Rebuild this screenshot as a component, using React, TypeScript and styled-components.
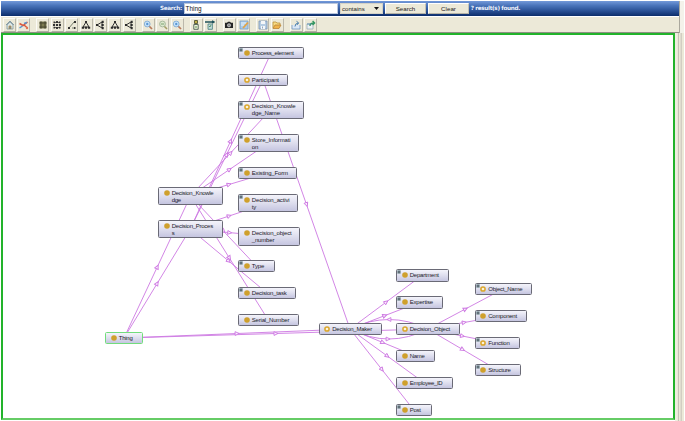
import React from 'react';
import styled, { createGlobalStyle } from 'styled-components';

const Global = createGlobalStyle`
  * { box-sizing: border-box; }
  html, body { margin: 0; padding: 0; overflow: hidden; background: #fff; }
`;

const Page = styled.div`
  display: flex;
  flex-direction: column;
  width: 685px;
  height: 421px;
  padding: 1px 1px 0 1px;
  background: #fff;
  font-family: 'Liberation Sans', Arial, sans-serif;
`;

const Top = styled.div`
  display: flex;
  height: 32px;
  flex: none;
  background: linear-gradient(90deg, #f4f2ea 0 683px, #fff 683px);
`;

const Bars = styled.div`
  display: flex;
  flex-direction: column;
  width: 679px;
  border-right: 1px solid #aaa89d;
`;

const SearchBar = styled.div`
  display: flex;
  align-items: flex-start;
  height: 15px;
  padding: 2px 0 0 159px;
  background: linear-gradient(#7399d9 0%, #4a74ba 30%, #2d5499 62%, #0c2d6b 100%);
`;

const Caption = styled.span<{ $w: number; $track: number }>`
  width: ${p => p.$w}px;
  flex: none;
  color: #eef3fc;
  font: bold 5.7px/11px 'DejaVu Sans', sans-serif;
  letter-spacing: ${p => p.$track}px;
  white-space: nowrap;
`;

const SearchInput = styled.div`
  width: 154px;
  height: 11px;
  padding-left: 1px;
  border: 1px solid #b9c6dc;
  background: #fff;
  color: #111;
  font-size: 6.4px;
  line-height: 10px;
`;

const Select = styled.div`
  display: flex;
  align-items: center;
  justify-content: space-between;
  width: 43px;
  height: 11px;
  margin-left: 2.5px;
  padding: 0 3px 0 1px;
  border: 1px solid #d4d2c7;
  background: #ece9d8;
  color: #222;
  font-size: 6.1px;
  line-height: 9px;
`;

const PushButton = styled.div`
  width: 41px;
  height: 11px;
  margin-left: 2px;
  border: 1px solid;
  border-color: #fff #c4c1b3 #b5b2a5 #fff;
  background: #ece9d8;
  color: #222;
  font-size: 6.2px;
  line-height: 9.5px;
  text-align: center;
`;

const Toolbar = styled.div`
  display: flex;
  align-items: center;
  gap: 6px;
  height: 17px;
  padding-left: 2px;
  border-top: 1px solid #fff;
  border-bottom: 1px solid #8f8e85;
  background: #ece9d8;
`;

const Group = styled.div`
  display: flex;
  gap: 1.4px;
`;

const Tool = styled.div`
  display: grid;
  place-items: center;
  width: 13px;
  height: 14px;
  border: 1px solid;
  border-color: #fbfaf5 #bbb8ab #b2afa3 #fbfaf5;
  background: #ece9d8;
  svg { display: block; }
`;

const Body = styled.div`
  display: flex;
  flex: 1;
  min-height: 0;
`;

const Canvas = styled.div`
  position: relative;
  width: 674px;
  height: 387px;
  border: 2px solid #22b32b;
  border-bottom-color: #66cc66;
  background: #fff;
`;

const Gutter = styled.div`
  width: 9px;
  background: linear-gradient(90deg,
    #f0ede1 0 2px, #ece9d8 2px 3px, #c6c3b8 3px 4px, #ece9d8 4px 5px,
    #e0dccf 5px 6px, #d2cdc2 6px 7px, #ece9d8 7px 9px);
`;

const Edges = styled.svg`
  position: absolute;
  left: -3px;
  top: -35px;
  overflow: visible;
`;

const NodeBox = styled.div<{ $x: number; $y: number; $w: number; $h: number; $root?: boolean }>`
  position: absolute;
  left: ${p => p.$x - 3}px;
  top: ${p => p.$y - 35}px;
  width: ${p => p.$w}px;
  height: ${p => p.$h}px;
  display: flex;
  align-items: flex-start;
  gap: 2.2px;
  padding: 1.9px 0 0 4.6px;
  border: 1px solid ${p => (p.$root ? '#72dc7c' : '#6a6a76')};
  border-radius: 1.5px;
  background: linear-gradient(#f4f4fb, #dedeee 50%, #c5c5e0);
`;

const DotIcon = styled.svg`
  flex: none;
  display: block;
  margin-top: 0.4px;
`;

const Label = styled.div<{ $track: number }>`
  color: #20202a;
  font-size: 6px;
  line-height: 6.7px;
  letter-spacing: ${p => p.$track - 0.06}px;
  white-space: pre;
`;

const Expander = styled.svg`
  position: absolute;
  left: 0;
  top: 0;
`;

type NodeSpec = { id: string; x: number; y: number; w: number; h: number; text: string; tw: number; plus?: boolean; ring?: boolean; root?: boolean };

const n = (id: string, x: number, y: number, r: number, b: number, text: string, tw: number, flags = ''): NodeSpec => ({
  id, x, y, w: r - x, h: b - y, text, tw,
  plus: flags.includes('+'), ring: flags.includes('o'), root: flags.includes('r'),
});

const nodes: NodeSpec[] = [
  n('pe', 238, 47, 304, 59, 'Process_element', -0.24, '+'),
  n('pa', 238, 74, 288, 86, 'Participant', -0.05, 'o'),
  n('dkn', 238, 100.5, 303.5, 119, 'Decision_Knowle\ndge_Name', -0.1, '+o'),
  n('st', 238, 134, 299, 152, 'Store_Informati\non', -0.1, '+'),
  n('ef', 238, 167, 297, 179, 'Existing_Form', -0.12, '+'),
  n('da', 238, 194, 298, 212, 'Decision_activi\nty', -0.1, '+'),
  n('on', 238, 227, 300, 245.5, 'Decision_object\n_number', -0.12),
  n('ty', 238, 260, 274.5, 272, 'Type', -0.1, '+'),
  n('dt', 238, 287, 296, 299, 'Decision_task', -0.14, '+'),
  n('sn', 238, 314, 298.5, 326, 'Serial_Number', -0.14),
  n('dk', 158, 187, 223, 205, 'Decision_Knowle\ndge', -0.24),
  n('dp', 158, 220, 222.5, 238, 'Decision_Proces\ns', -0.2),
  n('th', 105, 332, 143, 344, 'Thing', -0.2, 'r'),
  n('dm', 318.5, 323, 381.5, 335, 'Decision_Maker', -0.18, 'o'),
  n('do', 396, 323, 459.5, 335, 'Decision_Object', -0.18, 'o'),
  n('dep', 396, 269, 448.5, 281.5, 'Department', -0.18, '+'),
  n('ex', 396, 296, 443, 308.5, 'Expertise', -0.15, '+'),
  n('na', 396, 350, 435, 362, 'Name', -0.25),
  n('em', 396, 377, 453, 389, 'Employee_ID', -0.25),
  n('po', 396, 404, 431.5, 416, 'Post', -0.2, '+'),
  n('obn', 474.5, 283, 531.5, 295, 'Object_Name', -0.18, '+o'),
  n('co', 474.5, 310, 526.5, 322, 'Component', -0.22, '+'),
  n('fu', 474.5, 337, 519.5, 349, 'Function', -0.15, '+o'),
  n('sr', 474.5, 364, 520.5, 376, 'Structure', -0.15, '+'),
];

const links: [string, string][] = [
  ['dp', 'pe'], ['dp', 'pa'], ['pa', 'dm'], ['dk', 'dkn'], ['dk', 'st'], ['dk', 'ef'],
  ['dp', 'da'], ['dp', 'on'], ['dk', 'ty'], ['dp', 'dt'], ['dk', 'sn'], ['th', 'dk'],
  ['th', 'dp'], ['th', 'dm'], ['th', 'do'], ['dm', 'dep'], ['dm', 'ex'], ['dm', 'na'],
  ['dm', 'em'], ['dm', 'po'], ['do', 'obn'], ['do', 'co'], ['do', 'fu'], ['do', 'sr'],
];

const center = (id: string) => {
  const s = nodes.find(v => v.id === id)!;
  return [s.x + s.w / 2, s.y + s.h / 2];
};

const Arrow = ({ x, y, a }: { x: number; y: number; a: number }) => (
  <path d="M-1.9,-1.9 L2.1,0 L-1.9,1.9 Z" fill="#fbf0fd" transform={`translate(${x} ${y}) rotate(${a})`} />
);

const Graph = () => (
  <Edges width="674" height="421" viewBox="0 0 674 421" fill="none" stroke="#cd78e2" strokeWidth="0.9">
    {links.map(([a, b]) => {
      const [x1, y1] = center(a);
      const [x2, y2] = center(b);
      return <path key={a + b} d={`M${x1},${y1}L${x2},${y2}`} />;
    })}
    <path d="M350,329 Q389,310 428,329" />
    <path d="M350,329 Q389,349 428,329" />
    {links.map(([a, b]) => {
      const [x1, y1] = center(a);
      const [x2, y2] = center(b);
      const angle = (Math.atan2(y2 - y1, x2 - x1) * 180) / Math.PI;
      return <Arrow key={a + b} x={(x1 + x2) / 2} y={(y1 + y2) / 2} a={angle} />;
    })}
    <Arrow x={389} y={319.5} a={180} />
    <Arrow x={388} y={339} a={0} />
  </Edges>
);

const icons: Record<string, React.ReactNode> = {
  home: <><path d="M1,5 L5,1 L9,5" stroke="#6c8799" /><path d="M2,5v4h6v-4L5,2Z" fill="#dbe7e8" stroke="#8198a1" /><path d="M4,9V6h2v3" stroke="#bd9148" fill="#658aa6" /></>,
  cut: <><path d="M0.5,3.5L4,5.5 8.5,2M5,5l3.5,3" stroke="#d9593e" strokeWidth="1.5" /><path d="M0.5,8l3,-2M5,3.5l3,-1" stroke="#5b92cc" strokeWidth="1.5" /><circle cx="8" cy="8" r="1.2" fill="#e17654" /></>,
  grid: <><path d="M1.5,1.5h7v7h-7Z" fill="#8f8d5c" /><path d="M2,2h2.2v2.2H2ZM5.8,2h2.2v2.2H5.8ZM2,5.8h2.2v2.2H2ZM5.8,5.8h2.2v2.2H5.8Z" fill="#6a6840" stroke="#38382b" strokeWidth=".6" /></>,
  radial: <g stroke="#333"><path d="M1,5h8M5,1v8" strokeWidth="1.9" strokeDasharray="2 1" /><path d="M2.3,1.5v7M7.7,1.5v7" strokeWidth="1.6" strokeDasharray="1.8 .8" /><path d="M2.5,2.5h5M2.5,7.5h5" strokeWidth=".7" /></g>,
  spring: <><path d="M2,8L7,2M7,2h2M5,8h3" stroke="#5b6352" /><path d="M1,7h2v2H1ZM7,1h2v2H7ZM7,7h1.5v2H7Z" fill="#333" /></>,
  tree: <><path d="M5,2L2,7h6Z" stroke="#333" strokeWidth="1" /><path d="M4,1h2v2H4ZM.8,6.7h2.2v2H.8ZM3.9,6.7h2.2v2H3.9ZM7,6.7h2.2v2H7Z" fill="#2c2c2c" /></>,
  side: <><path d="M2,5L7,2v6Z" stroke="#333" strokeWidth="1" /><path d="M1,4h2v2H1ZM6.7,.8h2v2.2h-2ZM6.7,3.9h2v2.2h-2ZM6.7,7h2v2.2h-2Z" fill="#2c2c2c" /></>,
  zoom: <><path d="M6,6L9,9" stroke="#b97b5c" strokeWidth="1.7" /><circle cx="4.2" cy="4" r="2.9" fill="#c8e4fb" stroke="#78a4cf" /><path d="M3,4h2.5M4.2,2.8v2.4" stroke="#347bc5" /></>,
  fit: <><path d="M6,6L9,9" stroke="#a39e65" strokeWidth="1.6" /><circle cx="4.5" cy="4" r="2.9" fill="#dce8ce" stroke="#9aae91" /><path d="M3,4h3" stroke="#668f58" /></>,
  pin: <><path d="M3.5,0.5h3v3h-3Z" fill="#bdb046" stroke="#44452c" /><path d="M2.8,4.5h4.4v4.8H2.8Z" fill="#eff2dd" stroke="#354d43" /><path d="M4,7h2" stroke="#569352" strokeWidth="1.2" /></>,
  filter: <><path d="M0,2h9M7,.8l2,1.2-2,1.2" stroke="#21525b" strokeWidth="1.4" /><path d="M3,4h4.4v5.3H3Z" fill="#c4dddd" stroke="#467d7f" /><path d="M4,6l1,1 1,-2" stroke="#408348" /></>,
  camera: <><path d="M1,2.8h2l1,-1h2l1,1h2v5.2H1Z" fill="#252525" /><circle cx="5" cy="5.3" r="1.6" fill="#888" stroke="#eee" strokeWidth=".6" /></>,
  edit: <><path d="M1,1h8v8H1Z" fill="#a9cbea" stroke="#789cc5" /><path d="M2,3h5M2,5h3" stroke="#fff" /><path d="M4,8L9,2.5" stroke="#e4a445" strokeWidth="1.8" /></>,
  save: <><path d="M1,1h8v8H1Z" fill="#b5cce2" stroke="#7893b4" /><path d="M3,1h4v3H3ZM3,6h4v3H3Z" fill="#f5f7f8" /><path d="M4.5,6.5v2" stroke="#7893b4" /></>,
  open: <><path d="M1,8V2h3l1,1h3v2" fill="#f7db83" stroke="#ba913d" /><path d="M1,8.5L3,5h6L7,8.5Z" fill="#efb34b" stroke="#ba8438" /></>,
  exp: <><path d="M1,5v4h8V5" fill="#dce8f5" stroke="#7298c1" /><path d="M4,6.5q0,-3 3,-3.5M5.5,1.3l2.2,1.6-1.7,2" stroke="#467cae" strokeWidth="1" /></>,
  share: <><path d="M1,4h6v5H1Z" fill="#edf2f5" stroke="#9bacba" /><path d="M4,6q0,-3 4,-3M6.6,1l2,2-2,2" stroke="#349762" strokeWidth="1.4" /><path d="M1,4h4" stroke="#5289b7" /></>,
};

const groups = [
  ['home', 'cut'],
  ['grid', 'radial', 'spring', 'tree', 'side', 'tree', 'side'],
  ['zoom', 'fit', 'zoom'],
  ['pin', 'filter'],
  ['camera', 'edit'],
  ['save', 'open'],
  ['exp', 'share'],
];

export default function App() {
  return (
    <>
      <Global />
      <Page>
        <Top>
          <Bars>
            <SearchBar>
              <Caption $w={23.5} $track={-0.35}>Search:</Caption>
              <SearchInput>Thing</SearchInput>
              <Select>
                contains
                <svg width="5" height="3" viewBox="0 0 5 3"><path d="M0,0h5L2.5,3Z" fill="#111" /></svg>
              </Select>
              <PushButton>Search</PushButton>
              <PushButton>Clear</PushButton>
              <Caption $w={60} $track={-0.33}>&nbsp;? result(s) found.</Caption>
            </SearchBar>
            <Toolbar>
              {groups.map((g, i) => (
                <Group key={i}>
                  {g.map((name, j) => (
                    <Tool key={j}>
                      <svg width="10" height="10" viewBox="0 0 10 10" fill="none" strokeWidth=".8">{icons[name]}</svg>
                    </Tool>
                  ))}
                </Group>
              ))}
            </Toolbar>
          </Bars>
        </Top>
        <Body>
          <Canvas>
            <Graph />
            {nodes.map(v => (
              <NodeBox key={v.id} $x={v.x} $y={v.y} $w={v.w} $h={v.h} $root={v.root}>
                {v.plus && (
                  <Expander width="4" height="4" viewBox="0 0 4 4">
                    <path d="M0,0h4v4H0Z" fill="#b4c3ca" />
                    <path d="M.5,2h3M2,.5v3" stroke="#33424c" strokeWidth=".8" />
                  </Expander>
                )}
                <DotIcon width="6" height="6" viewBox="0 0 6 6">
                  {v.ring
                    ? <circle cx="3" cy="3" r="2.1" fill="#fbf3d8" stroke="#dba62c" strokeWidth="1.5" />
                    : <circle cx="3" cy="3" r="2.8" fill="#cfa02c" />}
                </DotIcon>
                <Label $track={v.tw}>{v.text}</Label>
              </NodeBox>
            ))}
          </Canvas>
          <Gutter />
        </Body>
      </Page>
    </>
  );
}
